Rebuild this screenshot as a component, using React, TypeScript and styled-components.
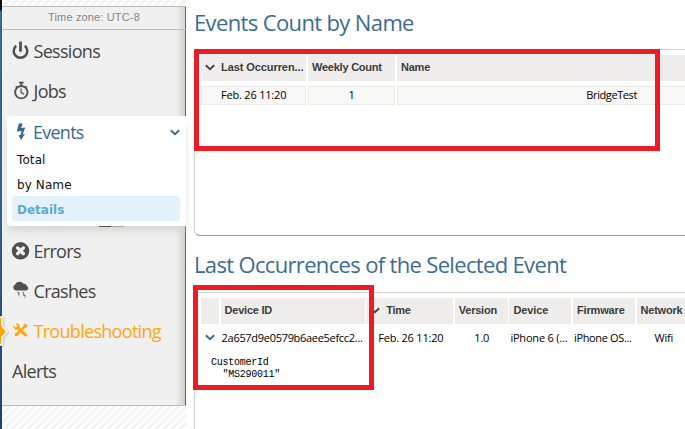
import React from "react";
import styled, { createGlobalStyle } from "styled-components";

const Global = createGlobalStyle`
  * { box-sizing: border-box; }
  body { margin: 0; overflow: hidden; background: #fff; }
`;

const Page = styled.div`
  position: relative;
  display: flex;
  width: 685px;
  height: 429px;
  overflow: hidden;
  background: #fff;
`;

const Rail = styled.div`
  flex: 0 0 2px;
  background: linear-gradient(#111 0 9px, #34699c 12px, #2b5a8a 60%, #1d446e);
`;

const Sidebar = styled.aside`
  flex: 0 0 184px;
  display: flex;
  flex-direction: column;
  color: #444;
  font-family: "Open Sans", sans-serif;
  background: repeating-linear-gradient(135deg, #fcfcfc 0 4px, #f2f2f2 4px 5.66px);
`;

const TimeZone = styled.div`
  height: 24px;
  margin-top: 6px;
  border: solid #bdbdbd;
  border-width: 1px 0;
  background: linear-gradient(90deg, #f0f0f0 174px, #d4d4d0 183px, #65635f 183px);
  color: #858585;
  font: 11px/21px "Liberation Sans", sans-serif;
  letter-spacing: 0.15px;
  text-align: center;
`;

const Menu = styled.nav`
  display: flex;
  flex-direction: column;
  height: 376px;
  border-bottom: 1px solid #bebdb8;
  background: linear-gradient(90deg, #f0f0f0 174px, #d0d0cb 183px, #65635f 183px);
`;

const MenuItem = styled.div<{ $active?: boolean; $plain?: boolean; $space?: number }>`
  display: flex;
  align-items: center;
  height: 40px;
  padding: 2px 0 0 ${(p) => (p.$plain ? 10 : 9)}px;
  gap: 3.5px;
  font-size: 18px;
  line-height: 38px;
  letter-spacing: ${(p) => p.$space ?? -0.7}px;
  color: ${(p) => (p.$active ? "#ffa60d" : "#444")};
  svg { flex: none; }
`;

const EventsPanel = styled.section`
  display: flex;
  flex-direction: column;
  position: relative;
  height: 110px;
  margin: 6px 0 4px 5px;
  padding: 0 6px 5px 5px;
  border-radius: 4px 0 0 4px;
  background: #fff;
  box-shadow: 0 7px 8px -2px #d5d5d2;
`;

const EventsTitle = styled.div`
  display: flex;
  align-items: center;
  height: 30px;
  padding-top: 2px;
  color: #3a6990;
  font-size: 18px;
  line-height: 28px;
  letter-spacing: -0.75px;
  span { flex: 1; }
`;

const SubItem = styled.div<{ $selected?: boolean }>`
  height: 25px;
  padding-left: 5px;
  border-radius: 4px;
  background: ${(p) => (p.$selected ? "#e3f2fa" : "transparent")};
  color: ${(p) => (p.$selected ? "#60a9cb" : "#111")};
  font: ${(p) => (p.$selected ? "bold" : "normal")} 12px/28px "DejaVu Sans", sans-serif;
  letter-spacing: ${(p) => (p.$selected ? "0px" : "0.1px")};
`;

const ScrollMark = styled.i`
  position: absolute;
  left: 92px;
  bottom: -1px;
  width: 25px;
  height: 1px;
  background: linear-gradient(90deg, #555 12px, #aaa 12px);
`;

const Main = styled.main`
  flex: 1;
  min-width: 0;
  padding-left: 8px;
`;

const Heading = styled.h1<{ $top: number; $space: number }>`
  height: 28px;
  margin: ${(p) => p.$top}px 0 0;
  color: #3c6c94;
  font: 22px/30px "Open Sans", sans-serif;
  letter-spacing: ${(p) => p.$space}px;
  white-space: nowrap;
`;

const Panel = styled.section<{ $top: number; $height: number }>`
  width: 520px;
  height: ${(p) => p.$height}px;
  margin-top: ${(p) => p.$top}px;
  padding: 5px 0 0 6px;
  border: 1px solid #d3d3d3;
  border-radius: 0 0 0 6px;
`;

const CountPanel = styled(Panel)`
  border-bottom-color: #999;
`;

const Columns = styled.div<{ $cols: string; $gap: number }>`
  display: grid;
  grid-template-columns: ${(p) => p.$cols};
  column-gap: ${(p) => p.$gap}px;
`;

const Head = styled.div<{ $pad?: number; $space?: number }>`
  display: flex;
  align-items: center;
  height: 26px;
  padding-left: ${(p) => p.$pad ?? 4}px;
  padding-bottom: 1px;
  background: #eeedeb;
  color: #3c3c3c;
  font: bold 11px/25px "Liberation Sans", sans-serif;
  letter-spacing: ${(p) => p.$space ?? -0.23}px;
  white-space: nowrap;
  svg { flex: none; margin-right: 6px; }
`;

const Cell = styled.div<{ $align?: string; $pad?: number; $boxed?: boolean; $space?: number }>`
  display: flex;
  align-items: center;
  justify-content: ${(p) => p.$align ?? "flex-start"};
  height: 19px;
  padding-left: ${(p) => p.$pad ?? 0}px;
  padding-bottom: 2px;
  border: ${(p) => (p.$boxed ? "1px solid #ecebe9" : "0")};
  background: ${(p) => (p.$boxed ? "#f8f8f6" : "transparent")};
  color: #000;
  font: 11px/15px "Open Sans", sans-serif;
  letter-spacing: ${(p) => p.$space ?? -0.2}px;
  white-space: nowrap;
`;

const CountRow = styled(Columns)`
  margin-top: 5px;
`;

const DeviceRow = styled(Columns)`
  margin-top: 5px;
`;

const NameCell = styled(Cell)`
  padding-right: 75px;
`;

const Payload = styled.pre`
  margin: 9px 0 0 10px;
  color: #000;
  font: 10px/12px "Liberation Mono", monospace;
  letter-spacing: -0.25px;
`;

const Highlight = styled.div<{ $x: number; $y: number; $w: number; $h: number }>`
  position: absolute;
  left: ${(p) => p.$x}px;
  top: ${(p) => p.$y}px;
  width: ${(p) => p.$w}px;
  height: ${(p) => p.$h}px;
  border: 5px solid #ed1c24;
`;

const Pointer = styled.svg`
  position: absolute;
  left: 0;
  top: 313px;
  filter: drop-shadow(1px 1px 1px #0003);
`;

const Chevron = ({ color, width = 10 }: { color: string; width?: number }) => (
  <svg width={width} height="7" viewBox="0 0 10 7" fill="none" stroke={color} strokeWidth="1.9">
    <path d="M.8 1.2 5 5.2 9.2 1.2" />
  </svg>
);

const PowerIcon = () => (
  <svg width="19" height="20" viewBox="0 0 19 20" fill="none" stroke="#505050">
    <path d="M5.2 4.8A6.8 6.8 0 1 0 13.8 4.8" strokeWidth="2.5" />
    <path d="M9.5 .6v10" strokeWidth="2.8" />
  </svg>
);

const StopwatchIcon = () => (
  <svg width="19" height="20" viewBox="0 0 19 20" fill="none" stroke="#555">
    <circle cx="10.3" cy="11.2" r="6.2" strokeWidth="1.9" />
    <path d="M8 1.6h4.6M10.3 1.6v3.5M4.9 5.4l1.4 1.4M15.7 5.4l-1.4 1.4" strokeWidth="1.9" />
    <path d="M10.1 7.6v4l3 1.5" strokeWidth="1.3" />
  </svg>
);

const BoltIcon = () => (
  <svg width="21" height="18" viewBox="0 0 21 18" fill="#3a6990">
    <path d="M6.8 .5h3.8L9.2 5l4-.6-2.4 6.8 2.1-.3L9.1 17l-2.6-4.7 2-.2 1-4.1-4.8.6Z" />
  </svg>
);

const ErrorIcon = () => (
  <svg width="19" height="20" viewBox="0 0 19 20">
    <circle cx="9.5" cy="9.8" r="8.7" fill="#505050" />
    <path d="m6.7 7 5.6 5.6m0-5.6-5.6 5.6" stroke="#f2f2f2" strokeWidth="3.4" strokeLinecap="round" />
  </svg>
);

const StormIcon = () => (
  <svg width="19" height="20" viewBox="0 0 19 20" fill="#505050">
    <path d="M5 9.5a3.2 3.2 0 0 1-.8-6.1A4.5 3.6 0 0 1 12.5 2.7c2-.3 3.1.8 3 2A2.5 2.5 0 0 1 15.3 9.5Z" />
    <path d="m6 10.8 2 .2 1 2.6-1-.2.7 3.4-2-4 .8.1Zm5.5 0 1.4.1.4 2.7 1.5.3-.7 4.2-.7-3-1.8-.5.6-1Z" opacity=".7" />
  </svg>
);

const ToolsIcon = () => (
  <svg width="19" height="20" viewBox="0 0 19 20" fill="#ffa60d">
    <path d="M2.4 4.6 4.8 6.6 6.6 4.8 4.5 2.8C7.4 2 9.4 4 8.7 6.4l6.8 6.3c1.7 1.6-.6 4-2.3 2.3L6.8 8.7C4.4 9.4 1.8 7.4 2.4 4.6Z" />
    <path d="m9.6 8 3-3-.5-.8 2.3-1.8 2.4 2.3-2 2.4-1-.1-2.7 2.9-4.8 5c-1.4 1.3-3.7-.5-2.3-2.1Z" />
  </svg>
);

export default function App() {
  return (
    <>
      <Global />
      <Page>
        <Rail />
        <Sidebar>
          <TimeZone>Time zone: UTC-8</TimeZone>
          <Menu>
            <MenuItem><PowerIcon />Sessions</MenuItem>
            <MenuItem><StopwatchIcon />Jobs</MenuItem>
            <EventsPanel>
              <EventsTitle><BoltIcon /><span>Events</span><Chevron color="#3a6990" /></EventsTitle>
              <SubItem>Total</SubItem>
              <SubItem>by Name</SubItem>
              <SubItem $selected>Details</SubItem>
              <ScrollMark />
            </EventsPanel>
            <MenuItem><ErrorIcon />Errors</MenuItem>
            <MenuItem><StormIcon />Crashes</MenuItem>
            <MenuItem $active><ToolsIcon />Troubleshooting</MenuItem>
            <MenuItem $plain $space={-0.7}>Alerts</MenuItem>
          </Menu>
        </Sidebar>
        <Main>
          <Heading $top={7} $space={-0.63}>Events Count by Name</Heading>
          <CountPanel $top={14} $height={187}>
            <Columns $cols="105px 87px 1fr" $gap={2}>
              <Head $space={-0.08}><Chevron color="#444" />Last Occurren...</Head>
              <Head>Weekly Count</Head>
              <Head>Name</Head>
            </Columns>
            <CountRow $cols="105px 87px 1fr" $gap={2}>
              <Cell $boxed $pad={19}>Feb. 26 11:20</Cell>
              <Cell $boxed $align="center">1</Cell>
              <NameCell $boxed $align="flex-end" $space={-0.4}>BridgeTest</NameCell>
            </CountRow>
          </CountPanel>
          <Heading $top={13} $space={-0.66}>Last Occurrences of the Selected Event</Heading>
          <Panel $top={15} $height={160}>
            <Columns $cols="18px 144px 87px 53px 62px 62px 62px" $gap={1.6}>
              <Head />
              <Head>Device ID</Head>
              <Head><Chevron color="#444" />Time</Head>
              <Head>Version</Head>
              <Head $space={-0.1}>Device</Head>
              <Head $space={-0.15}>Firmware</Head>
              <Head>Network</Head>
            </Columns>
            <DeviceRow $cols="18px 144px 87px 53px 62px 62px 62px" $gap={1.6}>
              <Cell $pad={4}><Chevron color="#3a6990" /></Cell>
              <Cell $pad={1} $space={-0.3}>2a657d9e0579b6aee5efcc2...</Cell>
              <Cell $pad={12}>Feb. 26 11:20</Cell>
              <Cell $align="center" $pad={1}>1.0</Cell>
              <Cell $pad={1}>iPhone 6 (...</Cell>
              <Cell $pad={1} $space={-0.35}>iPhone OS...</Cell>
              <Cell $pad={18}>Wifi</Cell>
            </DeviceRow>
            <Payload>{'CustomerId\n  "MS290011"'}</Payload>
          </Panel>
        </Main>
        <Highlight $x={194} $y={49} $w={466} $h={102} />
        <Highlight $x={193} $y={285} $w={181} $h={105} />
        <Pointer width="11" height="37" viewBox="0 0 11 37">
          <path d="M-2 4H2v9l5 5.5L2 24v8H-2Z" fill="#ffa60d" stroke="#fff" strokeWidth="1.4" />
        </Pointer>
      </Page>
    </>
  );
}
